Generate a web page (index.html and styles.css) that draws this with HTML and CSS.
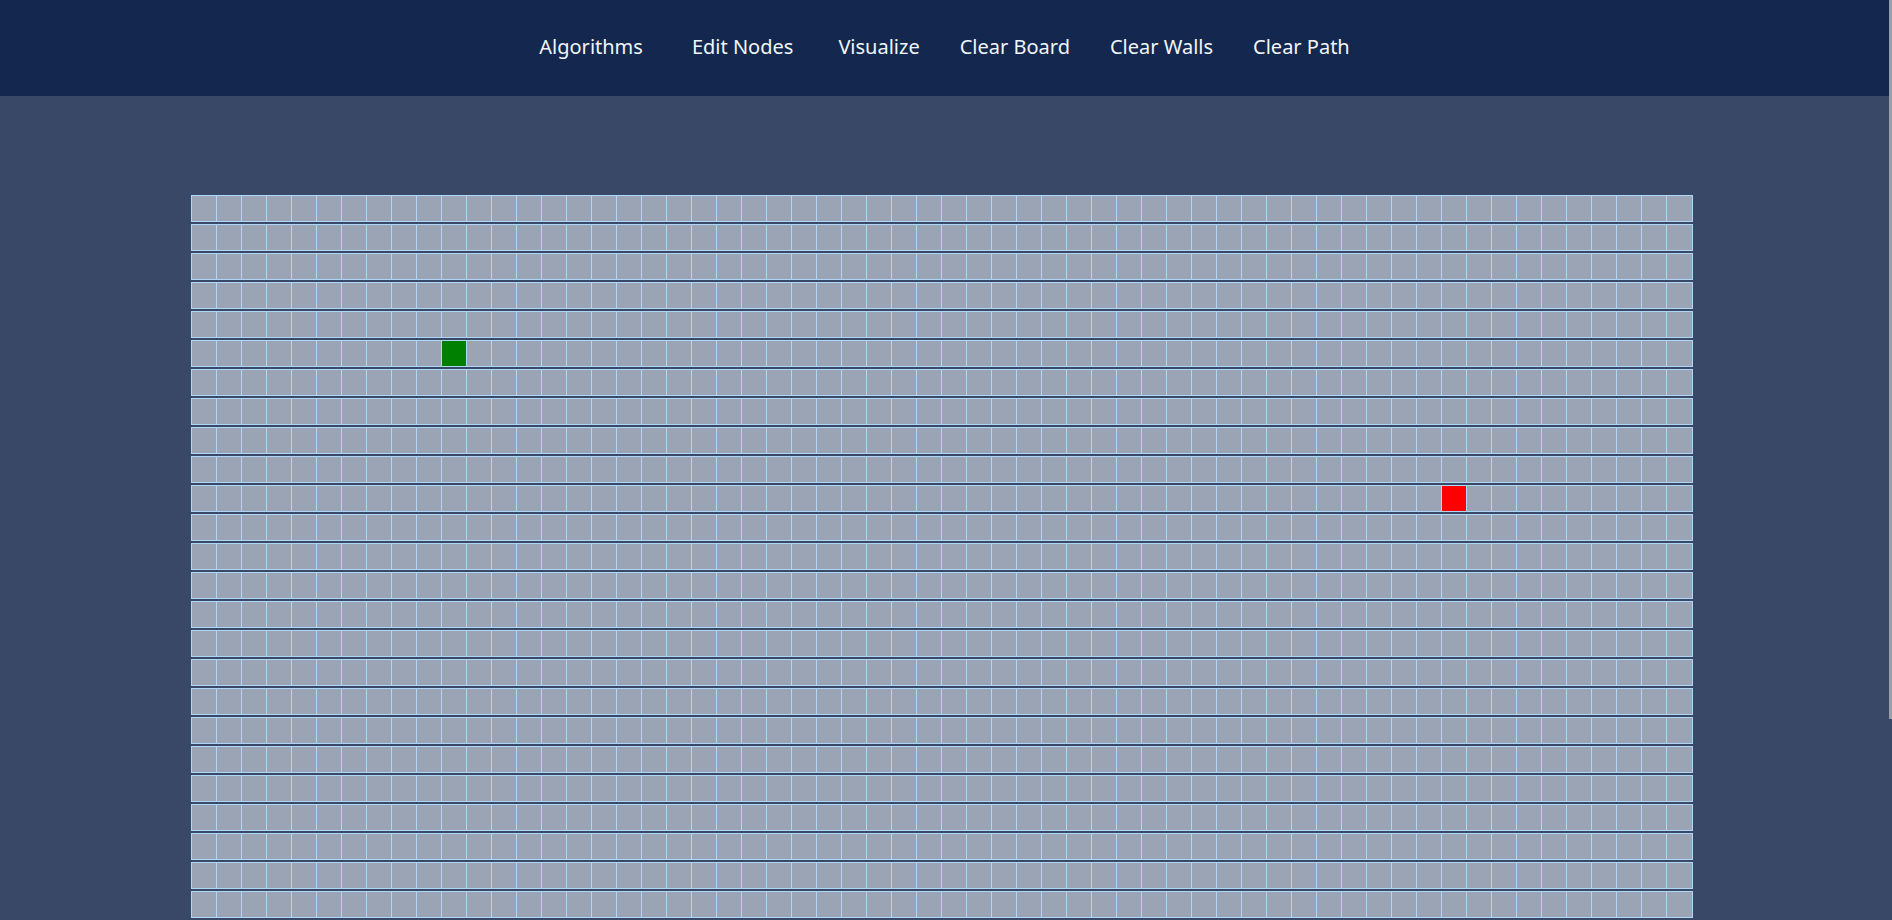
FILE: index.html
```html
<!DOCTYPE html>
<html lang="en">
<head>
<meta charset="utf-8">
<title>Pathfinding Visualizer</title>
<link rel="stylesheet" href="styles.css">
</head>
<body>
  <nav class="navbar">
    <ul class="nav-list">
      <li class="nav-item nav-dropdown nav-algorithms">Algorithms</li>
      <li class="nav-item nav-dropdown nav-edit">Edit Nodes</li>
      <li class="nav-item">Visualize</li>
      <li class="nav-item">Clear Board</li>
      <li class="nav-item">Clear Walls</li>
      <li class="nav-item">Clear Path</li>
    </ul>
  </nav>
  <main class="board">
    <div class="grid" id="grid"></div>
  </main>
  <div class="scroll-thumb"></div>
  <script src="script.js"></script>
</body>
</html>
```

FILE: styles.css
```css
html, body {
  margin: 0;
  padding: 0;
  height: 100%;
  overflow: hidden;
}
body {
  background: #394867;
  font-family: "Noto Sans", "Open Sans", sans-serif;
}
.navbar {
  height: 96px;
  background: #14274e;
  box-sizing: border-box;
  padding-top: 33px;
}
.nav-list {
  list-style: none;
  margin: 0;
  padding: 0 3px 0 0;
  display: flex;
  justify-content: center;
  gap: 40px;
}
.nav-item {
  color: #f1f6f9;
  font-size: 20px;
  line-height: 27px;
  cursor: pointer;
}
.nav-algorithms { margin-right: 9px; }
.nav-edit { margin-right: 5px; }
.board {
  padding: 100px 0 0 192px;
}
.grid {
  display: flex;
  flex-direction: column;
  gap: 4px;
}
.row {
  display: flex;
}
.node {
  width: 25px;
  height: 25px;
  flex: none;
  background: #9ba4b4;
  outline: 1px solid rgb(175, 216, 248);
}
.node-start { background: #008000; }
.node-finish { background: #ff0000; }
.scroll-thumb {
  position: fixed;
  top: 0;
  right: 0;
  width: 3px;
  height: 719px;
  background: #9a9ea8;
}
```

FILE: script.js
```js
(function () {
  var grid = document.getElementById('grid');
  var ROWS = 34, COLS = 60;
  for (var r = 0; r < ROWS; r++) {
    var row = document.createElement('div');
    row.className = 'row';
    for (var c = 0; c < COLS; c++) {
      var node = document.createElement('div');
      node.className = 'node';
      if (r === 5 && c === 10) node.className += ' node-start';
      if (r === 10 && c === 50) node.className += ' node-finish';
      row.appendChild(node);
    }
    grid.appendChild(row);
  }
})();
```
